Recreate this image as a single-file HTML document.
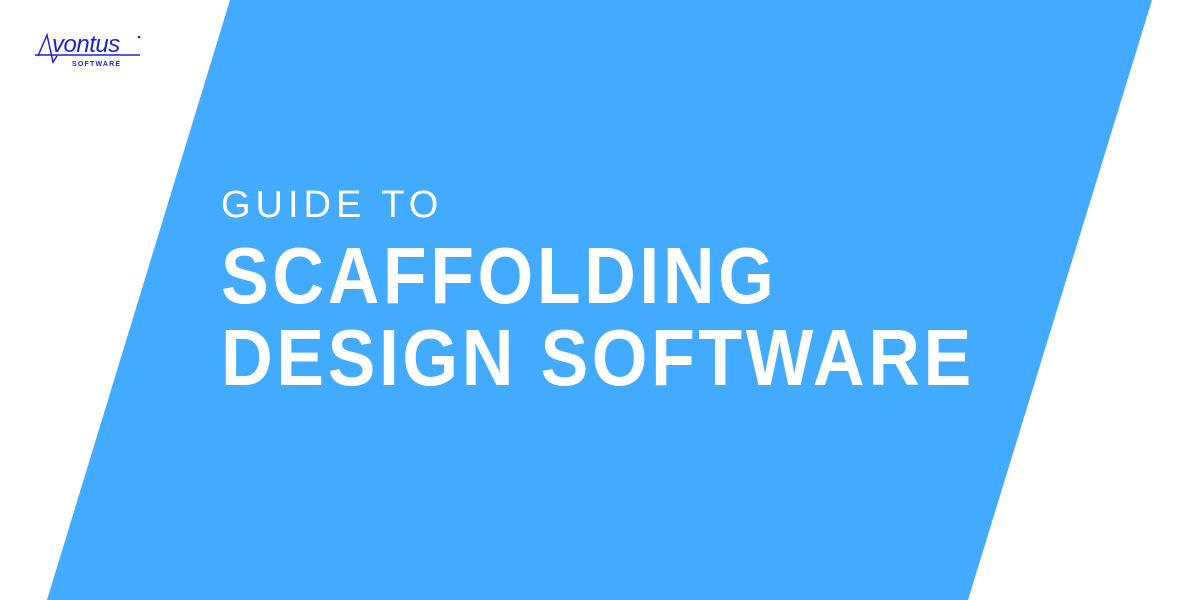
<!DOCTYPE html>
<html><head><meta charset="utf-8"><style>
html,body{margin:0;padding:0}
body{width:1200px;height:600px;position:relative;overflow:hidden;background:#fff;font-family:"Liberation Sans",sans-serif}
.t{position:absolute;left:221px;color:#fff;white-space:nowrap;transform-origin:0 0}
.g{top:183px;font-size:38px;letter-spacing:5px;line-height:44px}
.b{font-weight:bold;font-size:80px;line-height:80px;letter-spacing:4px;transform:scaleX(0.895)}
</style></head><body>
<svg width="1200" height="600" style="position:absolute;left:0;top:0">
<polygon points="230,0 1152,0 968,600 47,600" fill="#42aaff"/>
<g fill="none" stroke="#1f1fd6" stroke-width="1.5">
<line x1="35" y1="55" x2="140" y2="55"/>
<path d="M38,56 L47,35 L53,62 L57,56"/>
</g>
<text x="52" y="52" font-family="Liberation Sans" font-style="italic" font-size="24" fill="#1f1fd6" letter-spacing="-0.5">vontus</text>
<circle cx="139" cy="37" r="1.3" fill="#1f1fd6"/>
<text x="72" y="66" font-family="Liberation Sans" font-weight="bold" font-size="7" fill="#1f1fd6" letter-spacing="1.2">SOFTWARE</text>
</svg>
<div class="t g">GUIDE TO</div>
<div class="t b" style="top:236px">SCAFFOLDING</div>
<div class="t b" style="top:318px">DESIGN SOFTWARE</div>
</body></html>
